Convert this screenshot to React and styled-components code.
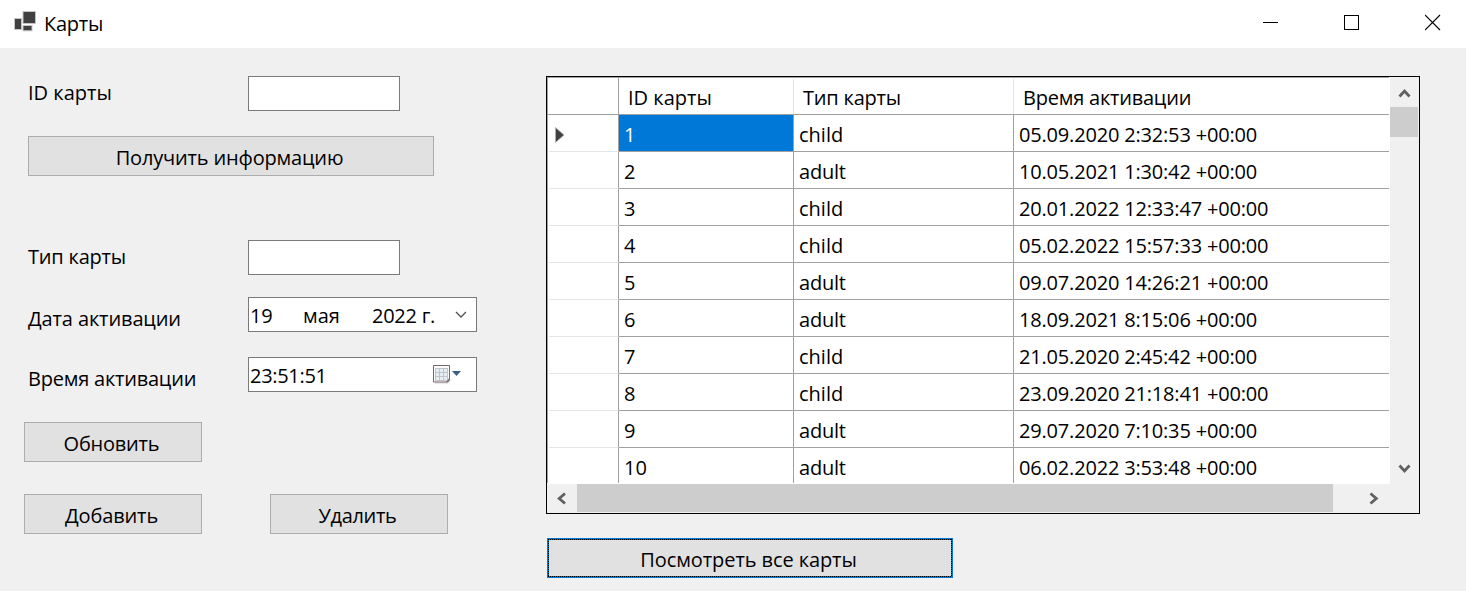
import React from 'react';
import styled, { createGlobalStyle } from 'styled-components';

const GlobalStyle = createGlobalStyle`
  * { box-sizing: border-box; }
  body { margin: 0; background: #f0f0f0; overflow: hidden; }
  button, input { font: inherit; color: inherit; border-radius: 0; }
`;

const Window = styled.div`
  width: 1466px;
  height: 591px;
  display: flex;
  flex-direction: column;
  background: #f0f0f0;
  color: #000;
  font-family: 'Open Sans', 'Noto Sans', sans-serif;
  font-size: 20px;
  line-height: 28px;
  white-space: pre;
`;

const TitleBar = styled.header`
  height: 48px;
  flex: none;
  display: flex;
  background: #fff;
`;

const AppIcon = styled.svg`
  margin: 10px 8px 0 13px;
  flex: none;
`;

const Title = styled.h1`
  flex: 1;
  margin: 10px 0 0;
  font: inherit;
`;

const Caption = styled.div`
  display: flex;
`;

const CaptionButton = styled.button`
  display: flex;
  align-items: flex-start;
  width: 81px;
  height: 48px;
  padding: 14px 0 0 40px;
  border: 0;
  background: none;
  svg { flex: none; }
`;

const Text = styled.span`
  display: inline-block;
  letter-spacing: ${(p) => p.$ls || 0}px;
`;

const Client = styled.main`
  flex: 1;
  display: flex;
  align-items: flex-start;
`;

const Form = styled.section`
  width: 546px;
  padding: 28px 0 0 24px;
`;

const Field = styled.label`
  display: flex;
  height: 35px;
  margin-top: ${(p) => p.$gap || 0}px;
  padding-left: 4px;
`;

const FieldName = styled.span`
  width: 220px;
  padding-top: ${(p) => p.$drop || 3}px;
`;

const TextInput = styled.input`
  width: 152px;
  height: 35px;
  padding: 0 4px;
  border: 1px solid #7a7a7a;
  background: #fff;
  outline: 0;
`;

const Picker = styled.span`
  display: flex;
  width: 229px;
  height: 35px;
  padding: 4px 0 0 1px;
  border: 1px solid #7a7a7a;
  background: #fff;
  svg { flex: none; }
`;

const PickerPart = styled.span`
  width: ${(p) => p.$width}px;
`;

const Button = styled.button`
  width: ${(p) => (p.$wide ? 406 : 178)}px;
  height: 40px;
  margin: ${(p) => p.$margin || '0'};
  padding: 3px 3px 0 0;
  border: 1px solid #adadad;
  background: #e1e1e1;
  line-height: 28px;
  text-align: center;
`;

const DefaultButton = styled(Button)`
  position: relative;
  border: 2px solid #0078d7;
  outline: 0;
  &::after {
    content: '';
    position: absolute;
    inset: -1px;
    background:
      repeating-linear-gradient(90deg, #000 0 1px, transparent 1px 2px) 0 0 / 100% 1px no-repeat,
      repeating-linear-gradient(90deg, #000 0 1px, transparent 1px 2px) 0 100% / 100% 1px no-repeat,
      repeating-linear-gradient(180deg, #000 0 1px, transparent 1px 2px) 0 0 / 1px 100% no-repeat,
      repeating-linear-gradient(180deg, #000 0 1px, transparent 1px 2px) 100% 0 / 1px 100% no-repeat;
  }
`;

const ButtonRow = styled.div`
  display: flex;
  gap: 68px;
  margin-top: 32px;
`;

const Results = styled.section`
  padding-top: 28px;
`;

const GridBox = styled.div`
  width: 874px;
  height: 438px;
  border: 1px solid #000;
  display: grid;
  grid-template-columns: 843px 29px;
  grid-template-rows: 407px 29px;
`;

const Viewport = styled.div`
  overflow: hidden;
  background: #fff;
  border-bottom: 1px solid #fff;
  border-right: 1px solid #fff;
`;

const Table = styled.div`
  border-top: 1px solid #a0a0a0;
  border-left: 1px solid #a0a0a0;
`;

const Row = styled.div`
  display: grid;
  grid-template-columns: 71px 175px 220px 1fr;
  height: 37px;
`;

const HeadCell = styled.div`
  padding: 6px 0 0 9px;
  border-bottom: 1px solid #a0a0a0;
  position: relative;
  &:not(:last-child)::after {
    content: '';
    position: absolute;
    right: 0;
    top: ${(p) => (p.$corner ? 0 : 1)}px;
    bottom: 0;
    width: 1px;
    background: ${(p) => (p.$corner ? '#a0a0a0' : '#e5e5e5')};
  }
`;

const RowHead = styled.div`
  border-right: 1px solid #a0a0a0;
  border-bottom: 1px solid #e5e5e5;
  margin-left: 1px;
  svg { display: block; margin: 11px 0 0 5px; }
`;

const Cell = styled.div`
  padding: 6px 0 0 5px;
  border-bottom: 1px solid #a0a0a0;
  border-right: ${(p) => (p.$last ? 0 : 1)}px solid #a0a0a0;
  background: ${(p) => (p.$selected ? '#0078d7' : '#fff')};
  color: ${(p) => (p.$selected ? '#fff' : '#000')};
`;

const VScroll = styled.div`
  display: flex;
  flex-direction: column;
  background: #f0f0f0;
`;

const HScroll = styled.div`
  display: flex;
  background: #f0f0f0;
`;

const Corner = styled.div`
  background: #f0f0f0;
`;

const Arrow = styled.span`
  width: 30px;
  height: 30px;
  flex: none;
  svg { display: block; }
`;

const VThumb = styled.div`
  width: 28px;
  height: 30px;
  margin-bottom: auto;
  background: #cdcdcd;
`;

const HThumb = styled.div`
  width: 756px;
  height: 28px;
  margin-right: auto;
  background: #cdcdcd;
`;

const chevrons = {
  up: 'M9.5 19.5 L14.5 14 L19.5 19.5',
  down: 'M9.5 11.5 L14.5 17 L19.5 11.5',
  left: 'M18 9.5 L12.2 14.5 L18 19.5',
  right: 'M10.5 9.5 L16.3 14.5 L10.5 19.5',
};

const ScrollArrow = ({ d }) => (
  <Arrow>
    <svg width="30" height="30" fill="none" stroke="#606060" strokeWidth="2.8">
      <path d={chevrons[d]} />
    </svg>
  </Arrow>
);

const cards = [
  ['1', 'child', '05.09.2020 2:32:53 +00:00'],
  ['2', 'adult', '10.05.2021 1:30:42 +00:00'],
  ['3', 'child', '20.01.2022 12:33:47 +00:00'],
  ['4', 'child', '05.02.2022 15:57:33 +00:00'],
  ['5', 'adult', '09.07.2020 14:26:21 +00:00'],
  ['6', 'adult', '18.09.2021 8:15:06 +00:00'],
  ['7', 'child', '21.05.2020 2:45:42 +00:00'],
  ['8', 'child', '23.09.2020 21:18:41 +00:00'],
  ['9', 'adult', '29.07.2020 7:10:35 +00:00'],
  ['10', 'adult', '06.02.2022 3:53:48 +00:00'],
];

export default function App() {
  return (
    <>
      <GlobalStyle />
      <Window>
        <TitleBar>
          <AppIcon width="23" height="22">
            <g fill="#404040" stroke="#c4c4c4" strokeWidth="1">
              <rect x="10" y="1.5" width="12.5" height="12" />
              <rect x="1.5" y="8.5" width="7" height="11" />
              <rect x="10" y="15.5" width="9" height="5.3" />
            </g>
          </AppIcon>
          <Title><Text $ls={-0.25}>Карты</Text></Title>
          <Caption>
            <CaptionButton aria-label="Свернуть">
              <svg width="17" height="17"><path d="M0 8.5H15" stroke="#000" /></svg>
            </CaptionButton>
            <CaptionButton aria-label="Развернуть">
              <svg width="17" height="17"><rect x="0.5" y="1.5" width="14" height="14" fill="none" stroke="#000" /></svg>
            </CaptionButton>
            <CaptionButton aria-label="Закрыть">
              <svg width="17" height="17"><path d="M0 1L15 16M15 1L0 16" stroke="#000" strokeWidth="1.1" /></svg>
            </CaptionButton>
          </Caption>
        </TitleBar>
        <Client>
          <Form>
            <Field>
              <FieldName><Text>ID карты</Text></FieldName>
              <TextInput />
            </Field>
            <Button $wide $margin="25px 0 0 4px"><Text $ls={-0.17}>Получить информацию</Text></Button>
            <Field $gap={64}>
              <FieldName><Text $ls={-0.2}>Тип карты</Text></FieldName>
              <TextInput />
            </Field>
            <Field $gap={22}>
              <FieldName $drop={8}><Text $ls={-0.12}>Дата активации</Text></FieldName>
              <Picker>
                <PickerPart $width={53}><Text $ls={-0.3}>19</Text></PickerPart>
                <PickerPart $width={69}><Text>мая</Text></PickerPart>
                <PickerPart $width={83}><Text $ls={-0.25}>2022 г.</Text></PickerPart>
                <svg width="14" height="24" fill="none" stroke="#505050" strokeWidth="1.3">
                  <path d="M1 10L6 15L11 10" />
                </svg>
              </Picker>
            </Field>
            <Field $gap={25}>
              <FieldName $drop={8}><Text $ls={-0.22}>Время активации</Text></FieldName>
              <Picker>
                <PickerPart $width={183}><Text $ls={-0.3}>23:51:51</Text></PickerPart>
                <svg width="30" height="24">
                  <path d="M1 20.5H13.5L17.5 17V19L15 21.5H2Z" fill="#d6d3d3" />
                  <path d="M0.5 3.5H16.5V17.5L14.5 20H0.5Z" fill="#fafafa" stroke="#75686a" />
                  <rect x="3" y="6" width="12" height="12" fill="#e6edf5" />
                  <path d="M2 6.5H15M2 10.5H15M2 14.5H15M2.5 6V19M6.5 6V19M10.5 6V19M14.5 6V18M2 18.5H13" stroke="#c4c4c8" />
                  <path d="M13.5 20L16.5 17" stroke="#75686a" strokeWidth="1.5" />
                  <path d="M19 9H28L23.5 14Z" fill="#3f5c85" />
                </svg>
              </Picker>
            </Field>
            <Button $margin="30px 0 0"><Text $ls={-0.22}>Обновить</Text></Button>
            <ButtonRow>
              <Button><Text $ls={-0.12}>Добавить</Text></Button>
              <Button><Text $ls={-0.35}>Удалить</Text></Button>
            </ButtonRow>
          </Form>
          <Results>
            <GridBox>
              <Viewport>
                <Table>
                  <Row>
                    <HeadCell $corner />
                    <HeadCell><Text>ID карты</Text></HeadCell>
                    <HeadCell><Text $ls={-0.2}>Тип карты</Text></HeadCell>
                    <HeadCell><Text $ls={-0.22}>Время активации</Text></HeadCell>
                  </Row>
                  {cards.map(([id, type, time], i) => (
                    <Row key={id}>
                      <RowHead>
                        {i === 0 && (
                          <svg width="12" height="18">
                            <path d="M1.5 1.5L10 9L1.5 16.5Z" fill="#404040" stroke="#b0b0b0" strokeWidth="0.8" />
                          </svg>
                        )}
                      </RowHead>
                      <Cell $selected={i === 0}><Text>{id}</Text></Cell>
                      <Cell><Text $ls={type === 'adult' ? -0.2 : 0}>{type}</Text></Cell>
                      <Cell $last><Text $ls={-0.18}>{time}</Text></Cell>
                    </Row>
                  ))}
                </Table>
              </Viewport>
              <VScroll>
                <ScrollArrow d="up" />
                <VThumb />
                <ScrollArrow d="down" />
              </VScroll>
              <HScroll>
                <ScrollArrow d="left" />
                <HThumb />
                <ScrollArrow d="right" />
              </HScroll>
              <Corner />
            </GridBox>
            <DefaultButton $wide $margin="24px 0 0 1px"><Text $ls={-0.09}>Посмотреть все карты</Text></DefaultButton>
          </Results>
        </Client>
      </Window>
    </>
  );
}
